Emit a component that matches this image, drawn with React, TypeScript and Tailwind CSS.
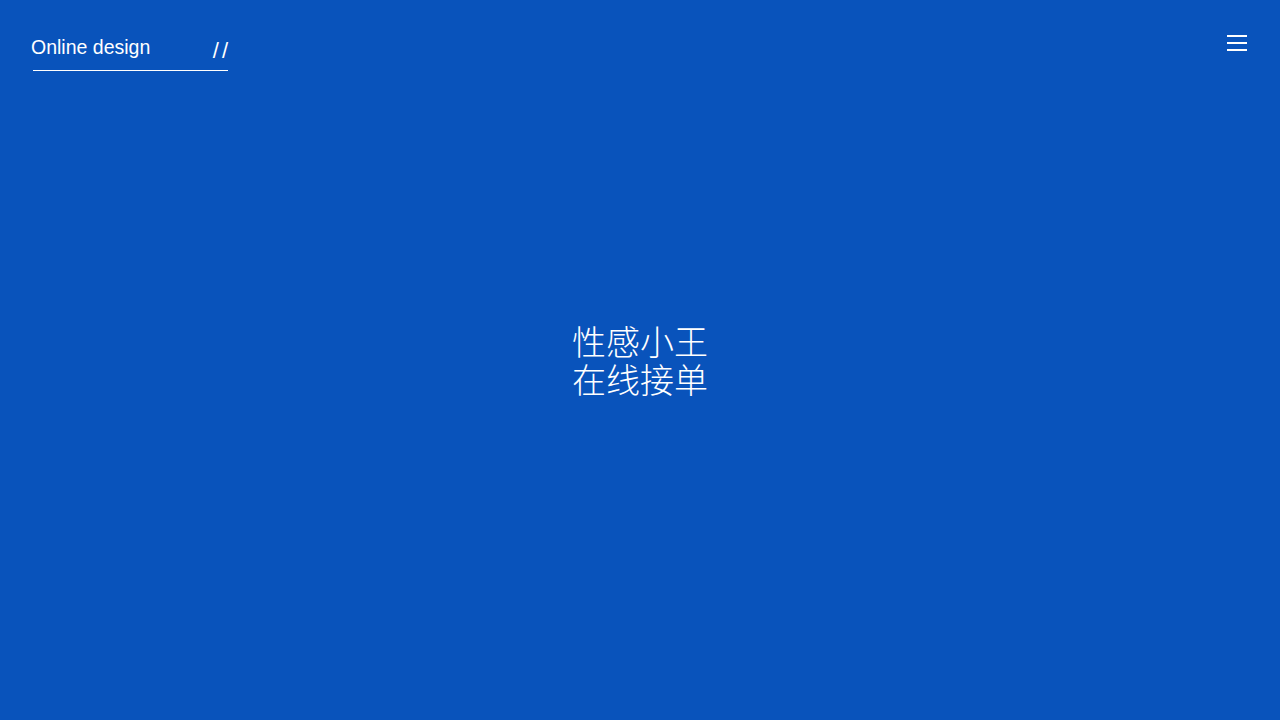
import React from "react";

export default function App() {
  return (
    <div className="relative w-full h-[720px] bg-[#0953bb] overflow-hidden flex items-center justify-center">
      <header className="absolute left-[33px] top-[34px] w-[195px]">
        <div className="flex items-center justify-between h-[28px]">
          <span className="text-white text-[19.5px] ml-[-2px] font-['Liberation_Sans',Arial,sans-serif]">
            Online design
          </span>
          <span className="text-white text-[22px] font-['Liberation_Sans',Arial,sans-serif] mt-[4px] tracking-[3px] mr-[-3px]">
            //
          </span>
        </div>
        <div className="mt-[8px] h-px bg-white" />
      </header>
      <button className="absolute right-[33px] top-[35px] w-[20px] flex flex-col gap-[5.5px]">
        <span className="block h-[1.5px] bg-white" />
        <span className="block h-[1.5px] bg-white" />
        <span className="block h-[1.5px] bg-white" />
      </button>
      <div className="flex flex-col items-center gap-[4px] text-white text-[34px] leading-[34px] font-light text-center font-['Noto_Sans_CJK_SC','Noto_Sans',sans-serif]">
        <div>性感小王</div>
        <div>在线接单</div>
      </div>
    </div>
  );
}
